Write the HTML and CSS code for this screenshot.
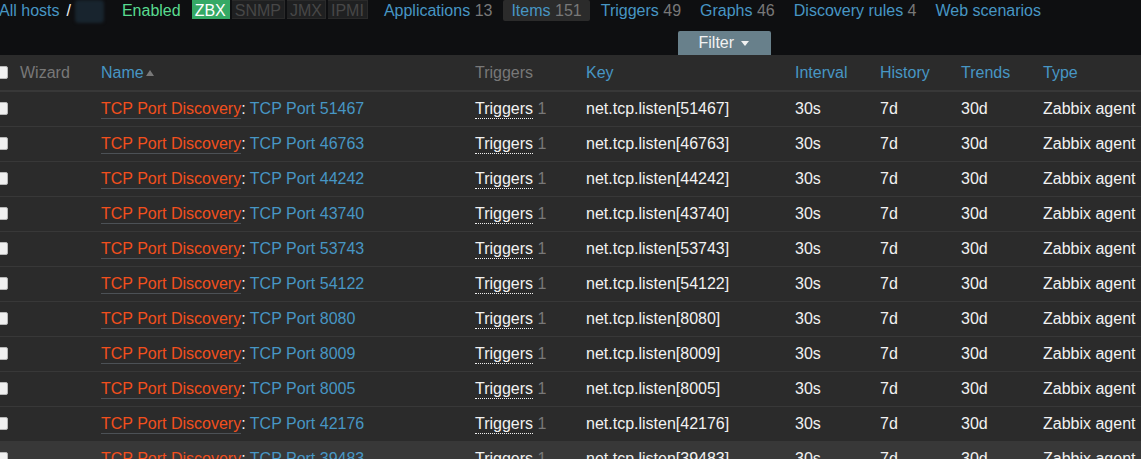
FILE: index.html
```html
<!DOCTYPE html>
<html lang="en">
<head>
<meta charset="utf-8">
<title>Items</title>
<link rel="stylesheet" href="styles.css">
</head>
<body>
<div class="page">
  <nav class="topnav">
    <a class="crumb link" href="#">All hosts</a>
    <span class="slash">/</span>
    <span class="hostname"></span>
    <span class="enabled">Enabled</span>
    <span class="status">
      <span class="stat on">ZBX</span>
      <span class="stat">SNMP</span>
      <span class="stat">JMX</span>
      <span class="stat">IPMI</span>
    </span>
    <ul class="tabs">
      <li class="tab"><a class="link" href="#">Applications</a> <span class="cnt">13</span></li>
      <li class="tab sel"><a class="link" href="#">Items</a> <span class="cnt">151</span></li>
      <li class="tab"><a class="link" href="#">Triggers</a> <span class="cnt">49</span></li>
      <li class="tab"><a class="link" href="#">Graphs</a> <span class="cnt">46</span></li>
      <li class="tab"><a class="link" href="#">Discovery rules</a> <span class="cnt">4</span></li>
      <li class="tab"><a class="link" href="#">Web scenarios</a></li>
    </ul>
  </nav>
  <div class="filterbar">
    <span class="filtertab">Filter <span class="caret"></span></span>
  </div>
  <table class="items">
    <colgroup>
      <col class="c-cb"><col class="c-wiz"><col class="c-name"><col class="c-trig"><col class="c-key"><col class="c-int"><col class="c-hist"><col class="c-trend"><col class="c-type">
    </colgroup>
    <thead>
      <tr>
        <th><span class="cb"></span></th>
        <th class="grey">Wizard</th>
        <th class="link">Name <span class="sortup"></span></th>
        <th class="grey">Triggers</th>
        <th class="link">Key</th>
        <th class="link">Interval</th>
        <th class="link">History</th>
        <th class="link">Trends</th>
        <th class="link">Type</th>
      </tr>
    </thead>
    <tbody id="rows"></tbody>
  </table>
</div>
<script src="script.js"></script>
</body>
</html>
```
FILE: script.js
```js
const ports = [51467, 46763, 44242, 43740, 53743, 54122, 8080, 8009, 8005, 42176, 39483];
const tb = document.getElementById('rows');
ports.forEach((p, i) => {
  const tr = document.createElement('tr');
  if (i === ports.length - 1) tr.className = 'hover';
  tr.innerHTML =
    '<td><span class="cb"></span></td>' +
    '<td></td>' +
    '<td><a class="disc" href="#">TCP Port Discovery</a>: <a class="link" href="#">TCP Port ' + p + '</a></td>' +
    '<td><a class="trg" href="#">Triggers</a> <span class="cnt">1</span></td>' +
    '<td>net.tcp.listen[' + p + ']</td>' +
    '<td>30s</td><td>7d</td><td>30d</td><td class="nowrap">Zabbix agent</td>';
  tb.appendChild(tr);
});
```
FILE: styles.css
```css
html, body {
  margin: 0;
  padding: 0;
  background: #0e0f11;
  overflow: hidden;
}
body {
  font-family: "Liberation Sans", Arial, sans-serif;
  font-size: 16px;
  color: #f2f2f2;
  width: 1141px;
  height: 459px;
}
a { text-decoration: none; }
.link { color: #4796c4; }
.grey { color: #787878; }
.cnt { color: #787878; }

.page { width: 1141px; }

.topnav {
  display: flex;
  align-items: flex-start;
  height: 31px;
  line-height: 21px;
}
.crumb { margin-left: -1px; }
.slash { margin-left: 7px; color: #f2f2f2; }
.hostname {
  display: inline-block;
  width: 29px;
  height: 23px;
  margin-left: 4px;
  background: #18242e;
  border-radius: 4px;
  filter: blur(1.5px);
}
.enabled { margin-left: 18px; color: #59db8f; }
.status {
  display: flex;
  gap: 2px;
  margin-left: 11px;
  height: 19px;
  line-height: 19px;
}
.stat {
  padding: 0 3px;
  background: #1f2021;
  color: #474747;
  border: 1px solid #2a2a2a;
  border-left: 0;
}
.stat.on {
  background: #35a965;
  color: #ffffff;
  border-color: #35a965;
}
.tabs {
  display: flex;
  list-style: none;
  margin: 0 0 0 8px;
  padding: 0;
  gap: 3px;
}
.tab {
  padding: 0 8px;
  height: 21px;
  border-radius: 2px;
}
.tab.sel { background: #2b2b2b; }

.filterbar {
  height: 24px;
  display: flex;
}
.filtertab {
  margin-left: 678px;
  width: 93px;
  height: 24px;
  line-height: 24px;
  background: #68808b;
  color: #f2f2f2;
  text-align: center;
  border-radius: 2px 2px 0 0;
  box-sizing: border-box;
  padding-right: 2px;
}
.caret {
  display: inline-block;
  width: 0;
  height: 0;
  border-left: 4px solid transparent;
  border-right: 4px solid transparent;
  border-top: 5px solid #f2f2f2;
  vertical-align: middle;
  margin-left: 2px;
}

.items {
  border-collapse: collapse;
  table-layout: fixed;
  width: 1236px;
  margin-left: -5px;
  background: #2b2b2b;
}
.c-cb { width: 25px; }
.c-wiz { width: 81px; }
.c-name { width: 374px; }
.c-trig { width: 111px; }
.c-key { width: 209px; }
.c-int { width: 85px; }
.c-hist { width: 81px; }
.c-trend { width: 82px; }
.c-type { width: 188px; }

th, td {
  padding: 0;
  text-align: left;
  white-space: nowrap;
  font-weight: normal;
}
th {
  height: 35px;
  border-bottom: 2px solid #383838;
}
td {
  height: 34px;
  border-bottom: 1px solid #383838;
}
tr.hover td { background: #383838; }

.cb {
  display: inline-block;
  width: 11px;
  height: 11px;
  background: #f0f0f0;
  border: 1px solid #b8b8b8;
  border-radius: 2px;
  vertical-align: middle;
  position: relative;
  top: -1px;
}
.sortup {
  display: inline-block;
  width: 0;
  height: 0;
  border-left: 4px solid transparent;
  border-right: 4px solid transparent;
  border-bottom: 6px solid #787878;
  vertical-align: middle;
  margin-left: -2px;
}
.disc {
  color: #f24f1d;
  border-bottom: 1px solid #4c5156;
  padding-bottom: 1px;
}
.trg {
  color: #f2f2f2;
  border-bottom: 1px dotted #f2f2f2;
  padding-bottom: 1px;
}
```
